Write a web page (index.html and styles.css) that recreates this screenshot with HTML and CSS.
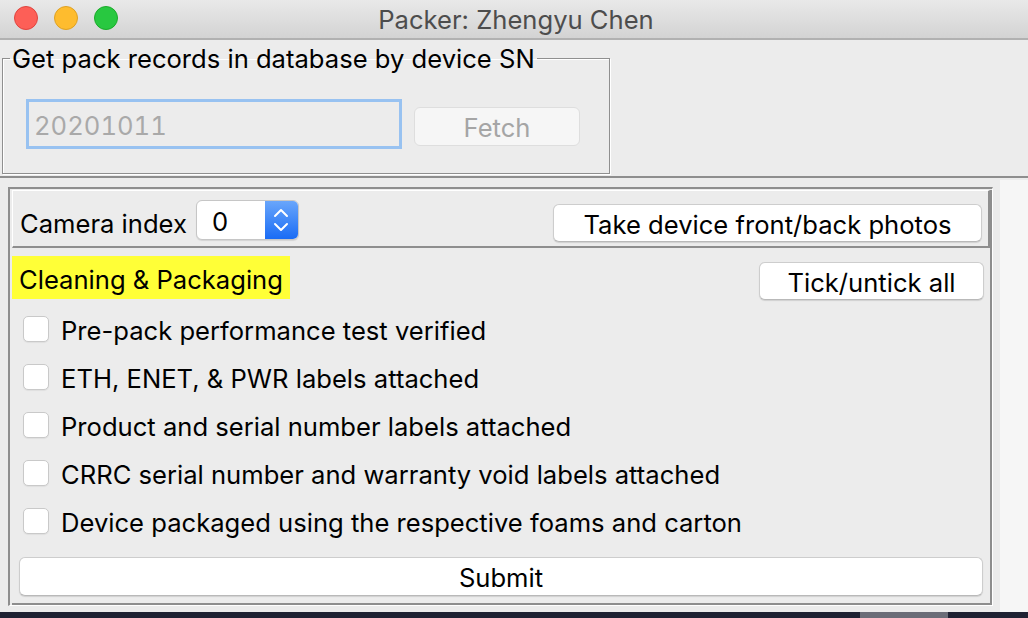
FILE: index.html
```html
<!DOCTYPE html>
<html>
<head>
<meta charset="utf-8">
<title>Packer</title>
<link rel="stylesheet" href="styles.css">
</head>
<body>
<div class="window">
  <header class="titlebar">
    <div class="lights">
      <span class="light red"></span>
      <span class="light yellow"></span>
      <span class="light green"></span>
    </div>
    <div class="title">Packer: Zhengyu Chen</div>
  </header>

  <fieldset class="group">
    <legend class="group-title">Get pack records in database by device SN</legend>
    <div class="fetch-row">
      <input class="sn-input" type="text" value="20201011" disabled>
      <button class="btn btn-fetch" disabled>Fetch</button>
    </div>
  </fieldset>

  <div class="lower">
    <div class="scroll">
      <div class="scroll-inner">
        <div class="camera-panel">
          <span class="label camera-label">Camera index</span>
          <div class="spinbox">
            <span class="spin-value">0</span>
            <span class="spin-arrows">
              <svg width="16" height="28" viewBox="0 0 16 28">
                <path d="M2 10 L8 4 L14 10" fill="none" stroke="#fff" stroke-width="2" stroke-linecap="round" stroke-linejoin="round"/>
                <path d="M2 18 L8 24 L14 18" fill="none" stroke="#fff" stroke-width="2" stroke-linecap="round" stroke-linejoin="round"/>
              </svg>
            </span>
          </div>
          <button class="btn btn-photos"><span class="btn-text">Take device front/back photos</span></button>
        </div>

        <div class="checklist">
          <div class="check-head">
            <span class="section-label">Cleaning &amp; Packaging</span>
            <button class="btn btn-tick"><span class="btn-text">Tick/untick all</span></button>
          </div>
          <ul class="checks">
            <li class="check-row"><span class="checkbox"></span><span class="label">Pre-pack performance test verified</span></li>
            <li class="check-row"><span class="checkbox"></span><span class="label">ETH, ENET, &amp; PWR labels attached</span></li>
            <li class="check-row"><span class="checkbox"></span><span class="label">Product and serial number labels attached</span></li>
            <li class="check-row"><span class="checkbox"></span><span class="label">CRRC serial number and warranty void labels attached</span></li>
            <li class="check-row"><span class="checkbox"></span><span class="label">Device packaged using the respective foams and carton</span></li>
          </ul>
          <button class="btn btn-submit"><span class="btn-text">Submit</span></button>
        </div>
      </div>
    </div>
    <div class="vtrack"></div>
  </div>
</div>
<div class="desktop"><span class="desktop-patch"></span></div>
</body>
</html>
```

FILE: styles.css
```css
* { box-sizing: border-box; }

html, body {
  margin: 0;
  padding: 0;
  width: 1028px;
  height: 618px;
  overflow: hidden;
  background: #1f2233;
}

body {
  font-family: Inter, "Noto Sans", "Liberation Sans", sans-serif;
  font-size: 25.6px;
  color: #000;
}

.window {
  width: 1028px;
  height: 612px;
  background: #ececec;
  display: flex;
  flex-direction: column;
}

/* Title bar */
.titlebar {
  height: 40px;
  flex: none;
  background: linear-gradient(#e9e9e9, #d3d3d3);
  border-bottom: 2px solid #b1b1b1;
  display: flex;
  align-items: center;
}

.lights {
  display: flex;
  gap: 16px;
  padding-left: 14px;
  margin-top: -2px;
}

.light {
  width: 24px;
  height: 24px;
  border-radius: 50%;
  display: block;
}
.light.red { background: #fd5f57; border: 1px solid #e0443e; }
.light.yellow { background: #febc2e; border: 1px solid #dea123; }
.light.green { background: #28c840; border: 1px solid #1aab29; }

.title {
  flex: 1;
  text-align: center;
  color: #4d4d4d;
  margin-right: 114px;
}

/* Group box */
.group {
  margin: 5px 0 0 2px;
  width: 608px;
  padding: 0;
  border: 1px solid #8f8f8f;
  box-shadow: 1px 1px 0 #fff, inset 1px 1px 0 #fff;
  flex: none;
}

.group-title {
  margin-left: 7px;
  padding: 2px 2px 0;
  line-height: 24px;
}

.fetch-row {
  display: flex;
  align-items: flex-start;
  padding: 28px 0 24px 23px;
}

.sn-input {
  width: 376px;
  height: 50px;
  border: 3px solid #98c2f1;
  background: #ececec;
  font: inherit;
  font-variant-numeric: tabular-nums;
  color: #a9a9a9;
  padding: 3px 0 0 5px;
  margin: 0;
  outline: none;
}

.btn {
  font: inherit;
  color: #000;
  background: #fff;
  border: 1px solid #cdcdcd;
  border-bottom-color: #b9b9b9;
  border-radius: 6px;
  box-shadow: 0 1px 1px rgba(0, 0, 0, 0.12);
  padding: 0;
  margin: 0;
  line-height: 1;
}

.btn-text {
  display: block;
  padding-top: 3px;
}

.btn-fetch {
  width: 166px;
  height: 39px;
  margin: 8px 0 0 12px;
  padding-top: 3px;
  background: #f6f6f6;
  color: #a5a5a5;
  border-color: #dedede;
  box-shadow: none;
}

/* Lower area */
.lower {
  margin-top: 2px;
  border-top: 2px solid #8e8e8e;
  flex: 1;
  display: flex;
  align-items: stretch;
}

.scroll {
  width: 985px;
  margin: 9px 0 6px 8px;
  border-top: 2px solid #8e8e8e;
  border-left: 2px solid #8e8e8e;
  border-right: 1px solid #fff;
  border-bottom: 1px solid #fff;
  padding: 1px 0 0 2px;
  display: flex;
}

.scroll-inner {
  flex: 1;
  border-right: 2px solid #8e8e8e;
  border-bottom: 2px solid #8e8e8e;
  display: flex;
  flex-direction: column;
}

.vtrack {
  width: 28px;
  margin: 2px 0 0 7px;
  background: #f6f6f6;
}

/* Camera panel */
.camera-panel {
  height: 58px;
  flex: none;
  border-top: 1px solid #fff;
  border-left: 1px solid #fff;
  border-right: 2px solid #8e8e8e;
  border-bottom: 2px solid #8e8e8e;
  display: flex;
  align-items: flex-start;
  padding: 0 6px 0 7px;
}

.label {
  line-height: 26px;
  padding-top: 3px;
  white-space: nowrap;
}

.camera-label {
  margin-top: 17px;
}

.spinbox {
  margin: 9px 0 0 9px;
  width: 103px;
  height: 40px;
  display: flex;
  background: #fff;
  border: 1px solid #c6c6c6;
  border-radius: 6px;
  box-shadow: 0 1px 1px rgba(0, 0, 0, 0.1);
  overflow: hidden;
}

.spin-value {
  flex: 1;
  line-height: 38px;
  padding: 2px 0 0 15px;
}

.spin-arrows {
  width: 33px;
  background: linear-gradient(#69a6fb, #1a6cf5);
  display: flex;
  align-items: center;
  justify-content: center;
}

.btn-photos {
  margin: 13px 0 0 auto;
  width: 429px;
  height: 38px;
}

/* Checklist */
.checklist {
  flex: 1;
  display: flex;
  flex-direction: column;
  padding: 0 6px 0 0;
}

.check-head {
  display: flex;
  align-items: flex-start;
  margin-top: 8px;
}

.section-label {
  background: #ffff37;
  height: 43px;
  line-height: 39px;
  padding: 4px 7px 0;
  width: 278px;
  white-space: nowrap;
}

.btn-tick {
  margin: 6px 0 0 auto;
  width: 225px;
  height: 38px;
}

.checks {
  list-style: none;
  margin: 5px 0 0 0;
  padding: 0;
}

.check-row {
  height: 48px;
  display: flex;
  align-items: center;
  padding-left: 11px;
  gap: 12px;
}

.checkbox {
  width: 26px;
  height: 26px;
  flex: none;
  background: #fff;
  border: 1px solid #c9c9c9;
  border-radius: 5px;
  box-shadow: 0 1px 1px rgba(0, 0, 0, 0.06);
}

.btn-submit {
  margin: 12px 0 0 7px;
  width: 964px;
  height: 39px;
}

/* Desktop strip below the window */
.desktop {
  height: 6px;
  display: flex;
  background: #1f2233;
}

.desktop-patch {
  margin-left: 860px;
  width: 88px;
  background: #6b6d78;
}
```
